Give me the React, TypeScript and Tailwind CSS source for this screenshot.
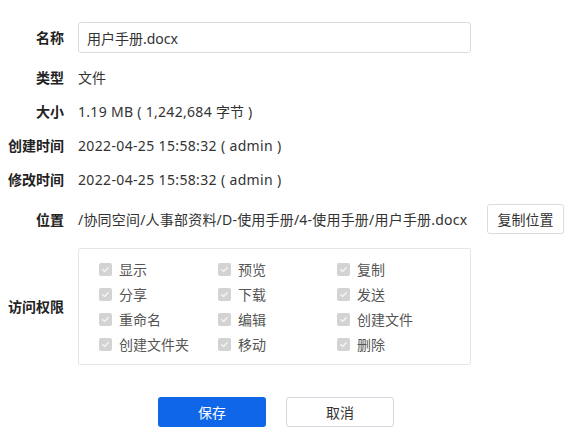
import { useState } from 'react'

const FONT = '[font-family:"Noto_Sans","Noto_Sans_CJK_SC",sans-serif]'

const perms = [
  '显示', '预览', '复制',
  '分享', '下载', '发送',
  '重命名', '编辑', '创建文件',
  '创建文件夹', '移动', '删除',
]

function Row({ label, children, className = '' }: { label: string; children: React.ReactNode; className?: string }) {
  return (
    <div className={`flex items-center ${className}`}>
      <div className="w-[64px] shrink-0 text-right text-[14px] font-bold text-[#222]">{label}</div>
      <div className="ml-[14px] flex min-w-0 flex-1 items-center text-[14px] text-[#333]">{children}</div>
    </div>
  )
}

function Check({ label }: { label: string }) {
  return (
    <label className="flex h-[25px] items-center">
      <span className="flex h-[13px] w-[13px] items-center justify-center rounded-[2px] bg-[#d3d3d3]">
        <svg width="9" height="9" viewBox="0 0 10 10" fill="none">
          <path d="M2 5.2l2 2L8 3" stroke="#f4f4f4" strokeWidth="1.6" strokeLinecap="round" strokeLinejoin="round" />
        </svg>
      </span>
      <span className="ml-[7px] text-[14px] text-[#555]">{label}</span>
    </label>
  )
}

export default function App() {
  const [name, setName] = useState('用户手册.docx')

  return (
    <div className={`h-[447px] w-[574px] bg-white pt-[22px] ${FONT}`}>
      <Row label="名称">
        <input
          value={name}
          onChange={(e) => setName(e.target.value)}
          className="h-[31px] w-[393px] rounded-[3px] border border-[#dcdcdc] px-[8px] text-[14px] text-[#333] outline-none"
        />
      </Row>
      <Row label="类型" className="mt-[7px] h-[34px]">文件</Row>
      <Row label="大小" className="h-[34px]">
        <span className="tracking-[0.3px]">1.19 MB ( 1,242,684 </span>
        <span className="ml-[4px]">字节</span>
        <span className="ml-[4px]">)</span>
      </Row>
      <Row label="创建时间" className="h-[34px]">
        <span className="tracking-[0.35px]">2022-04-25 15:58:32 ( admin )</span>
      </Row>
      <Row label="修改时间" className="h-[34px]">
        <span className="tracking-[0.35px]">2022-04-25 15:58:32 ( admin )</span>
      </Row>
      <Row label="位置" className="mt-[8px] h-[30px]">
        <span className="whitespace-nowrap tracking-[0.2px]">/协同空间/人事部资料/D-使用手册/4-使用手册/用户手册.docx</span>
        <button className="ml-auto mr-[10px] h-[30px] w-[77px] shrink-0 rounded-[3px] border border-[#d8dce3] text-[14px] text-[#333]">
          复制位置
        </button>
      </Row>
      <Row label="访问权限" className="mt-[14px]">
        <div className="grid h-[117px] w-[393px] grid-cols-[119px_119px_1fr] content-start rounded-[2px] border border-[#e6e6e6] pl-[20px] pt-[8px]">
          {perms.map((p) => (
            <Check key={p} label={p} />
          ))}
        </div>
      </Row>
      <div className="mt-[32px] flex gap-[20px] pl-[158px]">
        <button className="h-[30px] w-[108px] rounded-[3px] bg-[#0f66e9] text-[14px] text-white">保存</button>
        <button className="h-[30px] w-[108px] rounded-[3px] border border-[#d4d9e1] text-[14px] text-[#333]">取消</button>
      </div>
    </div>
  )
}
